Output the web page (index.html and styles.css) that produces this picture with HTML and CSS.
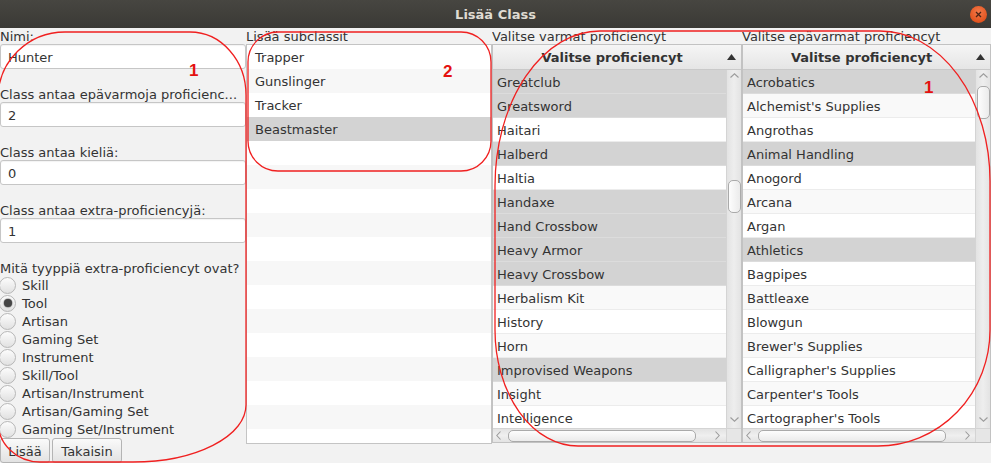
FILE: index.html
```html
<!DOCTYPE html>
<html lang="fi">
<head>
<meta charset="utf-8">
<title>Lisää Class</title>
<link rel="stylesheet" href="styles.css">
</head>
<body>
<header class="titlebar">
  <span class="title">Lisää Class</span>
  <span class="close"><svg width="17" height="17" viewBox="0 0 17 17"><path d="M6 6 L11 11 M11 6 L6 11" stroke="#4a2416" stroke-width="1.3" fill="none"/></svg></span>
</header>
<main class="content">
  <section class="col form">
    <div class="lbl">Nimi:</div>
    <div class="field">Hunter</div>
    <div class="lbl gap">Class antaa epävarmoja proficienc...</div>
    <div class="field">2</div>
    <div class="lbl gap">Class antaa kieliä:</div>
    <div class="field">0</div>
    <div class="lbl gap">Class antaa extra-proficiencyjä:</div>
    <div class="field">1</div>
    <div class="lbl gap">Mitä tyyppiä extra-proficiencyt ovat?</div>
    <div class="radios">
      <div class="radio"><span class="dot"></span>Skill</div>
      <div class="radio on"><span class="dot"></span>Tool</div>
      <div class="radio"><span class="dot"></span>Artisan</div>
      <div class="radio"><span class="dot"></span>Gaming Set</div>
      <div class="radio"><span class="dot"></span>Instrument</div>
      <div class="radio"><span class="dot"></span>Skill/Tool</div>
      <div class="radio"><span class="dot"></span>Artisan/Instrument</div>
      <div class="radio"><span class="dot"></span>Artisan/Gaming Set</div>
      <div class="radio"><span class="dot"></span>Gaming Set/Instrument</div>
    </div>
    <div class="buttons">
      <button class="btn btn-add">Lisää</button>
      <button class="btn btn-back">Takaisin</button>
    </div>
  </section>

  <section class="col">
    <div class="lbl">Lisää subclassit</div>
    <div class="listview">
      <div class="li">Trapper</div>
      <div class="li">Gunslinger</div>
      <div class="li">Tracker</div>
      <div class="li sel">Beastmaster</div>
      <div class="li"></div><div class="li"></div><div class="li"></div><div class="li"></div>
      <div class="li"></div><div class="li"></div><div class="li"></div><div class="li"></div>
      <div class="li"></div><div class="li"></div><div class="li"></div><div class="li"></div>
      <div class="li"></div>
    </div>
  </section>

  <section class="col">
    <div class="lbl">Valitse varmat proficiencyt</div>
    <div class="table t1">
      <div class="thead"><span class="th">Valitse proficiencyt</span><span class="sort"><svg width="9" height="6" viewBox="0 0 9 6"><path d="M0 6 L4.5 0 L9 6 Z" fill="#333"/></svg></span></div>
      <div class="tbody">
        <div class="rows">
          <div class="tr sel">Greatclub</div>
          <div class="tr sel">Greatsword</div>
          <div class="tr">Haitari</div>
          <div class="tr sel">Halberd</div>
          <div class="tr">Haltia</div>
          <div class="tr sel">Handaxe</div>
          <div class="tr sel">Hand Crossbow</div>
          <div class="tr sel">Heavy Armor</div>
          <div class="tr sel">Heavy Crossbow</div>
          <div class="tr alt">Herbalism Kit</div>
          <div class="tr">History</div>
          <div class="tr alt">Horn</div>
          <div class="tr sel">Improvised Weapons</div>
          <div class="tr alt">Insight</div>
          <div class="tr">Intelligence</div>
        </div>
        <div class="vscroll">
          <svg class="arrow-up" width="9" height="5" viewBox="0 0 9 5"><polyline points="0.5,4.5 4.5,0.8 8.5,4.5" fill="none" stroke="#9c9c9c" stroke-width="1.1"/></svg>
          <div class="thumb"></div>
          <svg class="arrow-down" width="9" height="5" viewBox="0 0 9 5"><polyline points="0.5,0.5 4.5,4.2 8.5,0.5" fill="none" stroke="#9c9c9c" stroke-width="1.1"/></svg>
        </div>
      </div>
      <div class="hrow">
        <div class="hscroll">
          <svg class="arrow-left" width="5" height="9" viewBox="0 0 5 9"><polyline points="4.5,0.5 0.8,4.5 4.5,8.5" fill="none" stroke="#9c9c9c" stroke-width="1.1"/></svg>
          <div class="hthumb"></div>
          <svg class="arrow-right" width="5" height="9" viewBox="0 0 5 9"><polyline points="0.5,0.5 4.2,4.5 0.5,8.5" fill="none" stroke="#9c9c9c" stroke-width="1.1"/></svg>
        </div>
        <div class="corner"></div>
      </div>
    </div>
  </section>

  <section class="col">
    <div class="lbl">Valitse epävarmat proficiencyt</div>
    <div class="table t2">
      <div class="thead"><span class="th">Valitse proficiencyt</span><span class="sort"><svg width="9" height="6" viewBox="0 0 9 6"><path d="M0 6 L4.5 0 L9 6 Z" fill="#333"/></svg></span></div>
      <div class="tbody">
        <div class="rows">
          <div class="tr sel">Acrobatics</div>
          <div class="tr alt">Alchemist's Supplies</div>
          <div class="tr">Angrothas</div>
          <div class="tr sel">Animal Handling</div>
          <div class="tr">Anogord</div>
          <div class="tr alt">Arcana</div>
          <div class="tr">Argan</div>
          <div class="tr sel">Athletics</div>
          <div class="tr">Bagpipes</div>
          <div class="tr alt">Battleaxe</div>
          <div class="tr">Blowgun</div>
          <div class="tr alt">Brewer's Supplies</div>
          <div class="tr">Calligrapher's Supplies</div>
          <div class="tr alt">Carpenter's Tools</div>
          <div class="tr">Cartographer's Tools</div>
        </div>
        <div class="vscroll">
          <svg class="arrow-up" width="9" height="5" viewBox="0 0 9 5"><polyline points="0.5,4.5 4.5,0.8 8.5,4.5" fill="none" stroke="#9c9c9c" stroke-width="1.1"/></svg>
          <div class="thumb"></div>
          <svg class="arrow-down" width="9" height="5" viewBox="0 0 9 5"><polyline points="0.5,0.5 4.5,4.2 8.5,0.5" fill="none" stroke="#9c9c9c" stroke-width="1.1"/></svg>
        </div>
      </div>
      <div class="hrow">
        <div class="hscroll">
          <svg class="arrow-left" width="5" height="9" viewBox="0 0 5 9"><polyline points="4.5,0.5 0.8,4.5 4.5,8.5" fill="none" stroke="#9c9c9c" stroke-width="1.1"/></svg>
          <div class="hthumb"></div>
          <svg class="arrow-right" width="5" height="9" viewBox="0 0 5 9"><polyline points="0.5,0.5 4.2,4.5 0.5,8.5" fill="none" stroke="#9c9c9c" stroke-width="1.1"/></svg>
        </div>
        <div class="corner"></div>
      </div>
    </div>
  </section>
</main>

<svg class="annot" width="991" height="463" viewBox="0 0 991 463">
  <g fill="none" stroke="#f02020" stroke-width="1.3">
    <path d="M65 32 L190 32 A56 63 0 0 1 246 95 L246 405 A113 57 0 0 1 133 462 L40 462 A42 40 0 0 1 -2 422 L-2 98 A67 66 0 0 1 65 32 Z"/>
    <rect x="248" y="32" width="243" height="139" rx="30" ry="30"/>
    <path d="M600 31 L880 31 A110 150 0 0 1 990 181 L990 330 A112 116 0 0 1 878 446 L578 446 A83 116 0 0 1 495 330 L495 186 A105 155 0 0 1 600 31 Z"/>
  </g>
  <g fill="#e41010" font-family="Liberation Sans, Arial, sans-serif" font-weight="bold" font-size="17">
    <text x="189" y="76">1</text>
    <text x="443" y="77">2</text>
    <text x="924" y="93">1</text>
  </g>
</svg>
</body>
</html>
```
FILE: styles.css
```css
* { box-sizing: border-box; margin: 0; padding: 0; }
html, body { width: 991px; height: 463px; overflow: hidden; }
body {
  background: #f2f2f2;
  font-family: "DejaVu Sans", "Liberation Sans", sans-serif;
  font-size: 13px;
  color: #333;
  position: relative;
}

/* title bar */
.titlebar {
  height: 28px;
  background: linear-gradient(#474641, #3a3935);
  display: flex;
  align-items: center;
  justify-content: center;
  position: relative;
}
.title { color: #dfdbd2; font-weight: bold; font-size: 13px; }
.close {
  position: absolute;
  left: 970px;
  top: 6px;
  width: 17px;
  height: 17px;
  border-radius: 50%;
  background: radial-gradient(circle at 50% 35%, #f47a4a, #e2541f 70%, #c9461a);
  display: block;
}
.close svg { display: block; }

/* columns */
.content {
  display: grid;
  grid-template-columns: 246px 246px 250px 249px;
  height: 435px;
}
.col { display: flex; flex-direction: column; min-width: 0; }
.lbl {
  height: 16px;
  padding-top: 1px;
  line-height: 15px;
  white-space: nowrap;
  overflow: hidden;
}

/* left form */
.form .lbl.gap { margin-top: 17px; }
.field {
  height: 25px;
  background: #fff;
  border: 1px solid #c6c6c6;
  border-radius: 3px;
  padding-left: 7px;
  line-height: 25px;
  box-shadow: inset 0 1px 1px rgba(0, 0, 0, 0.05);
}
.radios { display: flex; flex-direction: column; }
.radio {
  height: 18px;
  display: flex;
  align-items: center;
  gap: 6px;
  white-space: nowrap;
}
.dot {
  width: 17px;
  height: 17px;
  margin-left: -1px;
  flex: none;
  border-radius: 50%;
  border: 1px solid #b7b7b7;
  background: linear-gradient(#fcfcfc, #e1e1e1);
  display: flex;
  align-items: center;
  justify-content: center;
}
.radio.on .dot::after {
  content: "";
  width: 8px;
  height: 8px;
  border-radius: 50%;
  background: #454545;
  box-shadow: 0 0 1px 0.5px rgba(60, 60, 60, 0.6);
}
.buttons { display: flex; gap: 2px; height: 25px; }
.btn {
  font: inherit;
  color: #333;
  height: 25px;
  padding-top: 1px;
  border: 1px solid #b4b4b4;
  border-radius: 3px;
  background: linear-gradient(#fafafa, #e2e2e2);
  text-align: center;
}
.btn-add { width: 50px; }
.btn-back { width: 70px; }

/* list view */
.listview {
  height: 400px;
  border: 1px solid #c4c4c4;
  background: #fff;
  overflow: hidden;
}
.li { height: 24px; line-height: 26px; padding-left: 8px; white-space: nowrap; }
.li:nth-child(even) { background: #f7f7f7; }
.li.sel { background: #d3d3d3; }

/* tables */
.table {
  height: 399px;
  border: 1px solid #c2c2c2;
  background: #fff;
  display: flex;
  flex-direction: column;
}
.thead {
  height: 25px;
  flex: none;
  display: flex;
  align-items: center;
  border-bottom: 1px solid #c9c9c9;
  background: linear-gradient(#f5f5f5, #e5e5e5);
  font-weight: bold;
}
.th { flex: 1; text-align: center; padding-left: 10px; padding-top: 1px; white-space: nowrap; }
.sort { width: 20px; display: flex; justify-content: center; padding-bottom: 1px; }
.sort svg { display: block; }
.tbody { flex: 1; display: flex; min-height: 0; }
.rows { flex: 1; overflow: hidden; }
.tr {
  height: 24px;
  line-height: 25px;
  padding-left: 4px;
  border-bottom: 1px solid #ececec;
  white-space: nowrap;
}
.tr.alt { background: #f9f9f9; }
.tr.sel { background: #d3d3d3; border-bottom-color: #dcdcdc; }

.vscroll {
  width: 15px;
  flex: none;
  background: linear-gradient(to right, #e3e3e3, #eeeeee 50%, #e3e3e3);
  border-left: 1px solid #d4d4d4;
  display: flex;
  flex-direction: column;
  align-items: center;
}
.vscroll svg { display: block; flex: none; }
.arrow-up { margin-top: 3px; }
.thumb {
  width: 13px;
  height: 33px;
  flex: none;
  border: 1px solid #aaaaaa;
  border-radius: 5px;
  background: linear-gradient(to right, #fdfdfd, #ebebeb);
}
.t1 .thumb { margin-top: 102px; }
.t2 .thumb { margin-top: 8px; }
.arrow-down { margin-top: auto; margin-bottom: 6px; }

.hrow { height: 14px; flex: none; display: flex; }
.hscroll {
  flex: 1;
  background: linear-gradient(#e3e3e3, #efefef 50%, #e3e3e3);
  border-top: 1px solid #d4d4d4;
  display: flex;
  align-items: center;
  padding-left: 3px;
}
.hscroll svg { display: block; flex: none; }
.hthumb {
  width: 188px;
  height: 12px;
  flex: none;
  margin-left: 7px;
  border: 1px solid #aaaaaa;
  border-radius: 5px;
  background: linear-gradient(#fdfdfd, #ebebeb);
}
.arrow-right { margin-left: 19px; }
.corner {
  width: 15px;
  flex: none;
  background: #e6e6e6;
  border-top: 1px solid #d4d4d4;
  border-left: 1px solid #d4d4d4;
}

/* annotation layer drawn over the window */
.annot {
  position: absolute;
  left: 0;
  top: 0;
  pointer-events: none;
  overflow: visible;
}
```
